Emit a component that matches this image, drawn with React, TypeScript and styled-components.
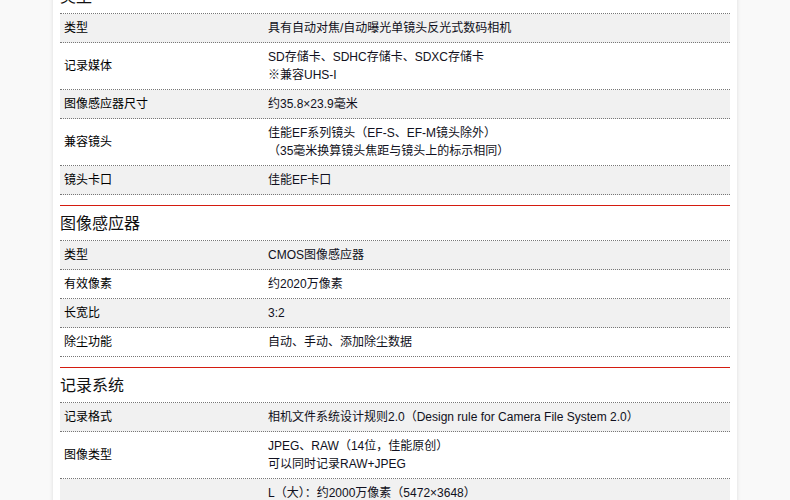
import React from 'react';
import styled, { createGlobalStyle } from 'styled-components';

type SpecRow = {
  label: string;
  lines: string[];
};

type SpecSection = {
  title: string;
  rows: SpecRow[];
};

const GlobalStyle = createGlobalStyle`
  html, body {
    margin: 0;
    padding: 0;
    background: #f9f9f9;
    overflow: hidden;
  }
  body {
    font-family: 'Liberation Sans', 'Noto Sans CJK SC', sans-serif;
    font-size: 12px;
    color: #111;
  }
`;

const Panel = styled.div`
  width: 684px;
  min-height: 100vh;
  margin: 0 auto;
  padding: 0 7px;
  box-sizing: border-box;
  background: #fff;
  box-shadow: 0 0 4px rgba(0, 0, 0, 0.12);
`;

const Section = styled.section<{ $first?: boolean }>`
  margin-top: ${({ $first }) => ($first ? '-22px' : '10px')};
  border-top: 1px solid #d41c10;
`;

const Title = styled.h2`
  margin: 0;
  height: 34px;
  line-height: 35px;
  font-size: 16px;
  font-weight: normal;
  color: #111;
`;

const Table = styled.div`
  border-top: 1px dotted #777;
`;

const Row = styled.div<{ $shade: boolean }>`
  display: grid;
  grid-template-columns: 204px 1fr;
  align-items: center;
  background: ${({ $shade }) => ($shade ? '#f1f1f1' : '#fff')};
  border-bottom: 1px dotted #777;
`;

const Label = styled.div`
  padding: 5px 4px;
  line-height: 18px;
  color: #000;
`;

const Value = styled.div`
  padding: 5px 4px;
  line-height: 18px;
  color: #101020;
`;

const sections: SpecSection[] = [
  {
    title: '类型',
    rows: [
      { label: '类型', lines: ['具有自动对焦/自动曝光单镜头反光式数码相机'] },
      { label: '记录媒体', lines: ['SD存储卡、SDHC存储卡、SDXC存储卡', '※兼容UHS-I'] },
      { label: '图像感应器尺寸', lines: ['约35.8×23.9毫米'] },
      { label: '兼容镜头', lines: ['佳能EF系列镜头（EF-S、EF-M镜头除外）', '（35毫米换算镜头焦距与镜头上的标示相同）'] },
      { label: '镜头卡口', lines: ['佳能EF卡口'] },
    ],
  },
  {
    title: '图像感应器',
    rows: [
      { label: '类型', lines: ['CMOS图像感应器'] },
      { label: '有效像素', lines: ['约2020万像素'] },
      { label: '长宽比', lines: ['3:2'] },
      { label: '除尘功能', lines: ['自动、手动、添加除尘数据'] },
    ],
  },
  {
    title: '记录系统',
    rows: [
      { label: '记录格式', lines: ['相机文件系统设计规则2.0（Design rule for Camera File System 2.0）'] },
      { label: '图像类型', lines: ['JPEG、RAW（14位，佳能原创）', '可以同时记录RAW+JPEG'] },
      {
        label: '记录像素',
        lines: [
          'L（大）：约2000万像素（5472×3648）',
          'M（中）：约890万像素（3648×2432）',
          'S1（小1）：约500万像素（2736×1824）',
          'S2（小2）：约250万像素（1920×1280）',
        ],
      },
    ],
  },
];

export default function App() {
  return (
    <>
      <GlobalStyle />
      <Panel>
        {sections.map((section, si) => (
          <Section key={section.title} $first={si === 0}>
            <Title>{section.title}</Title>
            <Table>
              {section.rows.map((row, ri) => (
                <Row key={row.label} $shade={ri % 2 === 0}>
                  <Label>{row.label}</Label>
                  <Value>
                    {row.lines.map((line) => (
                      <div key={line}>{line}</div>
                    ))}
                  </Value>
                </Row>
              ))}
            </Table>
          </Section>
        ))}
      </Panel>
    </>
  );
}
